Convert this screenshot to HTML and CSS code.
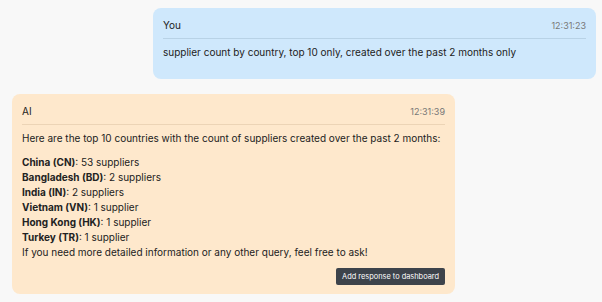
FILE: index.html
```html
<!DOCTYPE html>
<html lang="en">
<head>
    <meta charset="UTF-8">
    <meta name="viewport" content="width=device-width, initial-scale=1.0">
    <title>Chat</title>
    <link rel="stylesheet" href="styles.css">
</head>
<body>
    <div class="chat">
        <div class="message user">
            <div class="message-header">
                <span class="author">You</span>
                <span class="time">12:31:23</span>
            </div>
            <div class="message-body">
                <p>supplier count by country, top 10 only, created over the past 2 months only</p>
            </div>
        </div>

        <div class="message ai">
            <div class="message-header">
                <span class="author">AI</span>
                <span class="time">12:31:39</span>
            </div>
            <div class="message-body">
                <p class="intro">Here are the top 10 countries with the count of suppliers created over the past 2 months:</p>
                <p>
                    <strong>China (CN)</strong>: 53 suppliers<br>
                    <strong>Bangladesh (BD)</strong>: 2 suppliers<br>
                    <strong>India (IN)</strong>: 2 suppliers<br>
                    <strong>Vietnam (VN)</strong>: 1 supplier<br>
                    <strong>Hong Kong (HK)</strong>: 1 supplier<br>
                    <strong>Turkey (TR)</strong>: 1 supplier<br>
                    If you need more detailed information or any other query, feel free to ask!
                </p>
            </div>
            <div class="message-actions">
                <button class="add-btn">Add response to dashboard</button>
            </div>
        </div>
    </div>
</body>
</html>
```

FILE: styles.css
```css
body {
    margin: 0;
    background-color: #f8f8f8;
    font-family: Inter, 'Noto Sans', sans-serif;
    font-size: 10px;
    color: #222;
}

.chat {
    display: flex;
    flex-direction: column;
    gap: 15px;
    padding: 8px 6px 8px 12px;
}

.message {
    width: 443px;
    box-sizing: border-box;
    padding: 10px 10px 9px 10px;
    border-radius: 8px;
}

.message.user {
    align-self: flex-end;
    background-color: #cfe8fc;
}

.message.ai {
    align-self: flex-start;
    background-color: #fee8cc;
}

.message-header {
    display: flex;
    justify-content: space-between;
    align-items: center;
    line-height: 15px;
    padding-bottom: 5px;
    border-bottom: 1px solid #b8d2e6;
}

.ai .message-header {
    border-bottom-color: #ecd4b6;
}

.author {
    font-size: 10px;
}

.time {
    font-size: 9px;
    color: #777;
}

.message-body p {
    margin: 6px 0 10px 0;
    line-height: 15px;
}

.message-body p.intro {
    margin-bottom: 9px;
}

.message-body p + p {
    margin-top: 0;
    margin-bottom: 8px;
}

.message-actions {
    display: flex;
    justify-content: flex-end;
}

.add-btn {
    font-family: Inter, 'Noto Sans', sans-serif;
    font-size: 7.4px;
    color: #fff;
    background-color: #3d434b;
    border: none;
    border-radius: 2px;
    height: 17px;
    padding: 0 6px;
    cursor: pointer;
}
```
